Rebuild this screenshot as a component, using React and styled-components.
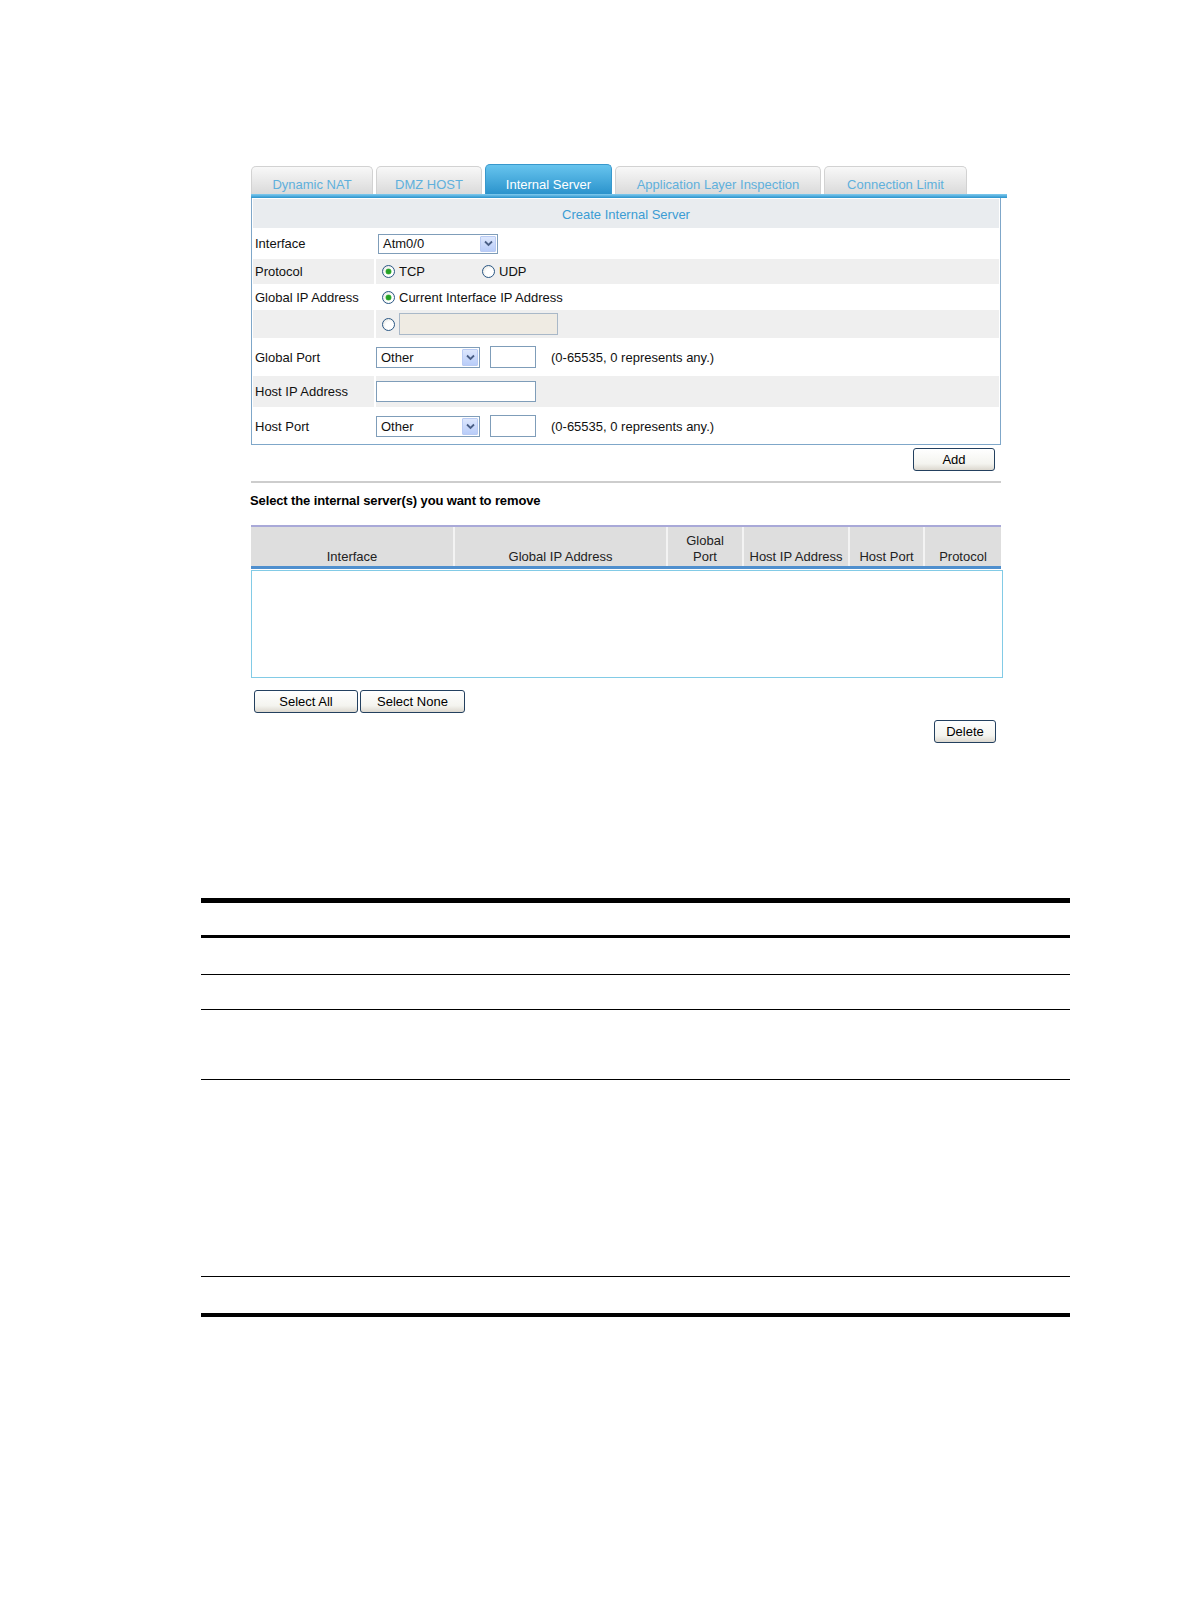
import React from 'react';
import styled, { createGlobalStyle } from 'styled-components';

const GlobalStyle = createGlobalStyle`
    body {
        margin: 0;
        background: #fff;
        font-family: "Liberation Sans", Arial, sans-serif;
        color: #111;
    }
    * { box-sizing: border-box; }
`;

const Page = styled.div`
    min-height: 1616px;
    padding-top: 164px;
    display: flex;
    flex-direction: column;
`;

const Ui = styled.div`
    margin-left: 251px;
    width: 756px;
    font-size: 13px;
`;

const TabBar = styled.div`
    display: flex;
    align-items: flex-end;
    gap: 3px;
    height: 30px;
`;

const Tab = styled.div`
    width: ${p => p.$w}px;
    height: ${p => (p.$active ? 30 : 28)}px;
    padding-top: ${p => (p.$active ? 10 : 8)}px;
    display: flex;
    align-items: center;
    justify-content: center;
    border: 1px solid ${p => (p.$active ? '#3898cc' : '#d2d2d2')};
    border-bottom: none;
    border-radius: 5px 5px 0 0;
    background: ${p => (p.$active
        ? 'linear-gradient(#67c4ee, #2b93cc)'
        : 'linear-gradient(#f8f8f8, #dadada)')};
    color: ${p => (p.$active ? '#fff' : '#5fb0dc')};
    white-space: nowrap;
`;

const TabLine = styled.div`
    height: 4px;
    width: 756px;
    background: linear-gradient(#80cbef, #2a92cb);
`;

const Panel = styled.div`
    width: 750px;
    border: 1px solid #7fa7c9;
    border-top: none;
    padding: 1px 1px 0;
    background: #fff;
    display: flex;
    flex-direction: column;
    gap: 1px;
`;

const HeaderRow = styled.div`
    height: 29px;
    padding-top: 2px;
    background: #e9ecef;
    color: #3b9cd4;
    display: flex;
    align-items: center;
    justify-content: center;
`;

const Row = styled.div`
    height: ${p => p.$h}px;
    display: grid;
    grid-template-columns: 121px 1fr;
    column-gap: 2px;
`;

const LabelCell = styled.div`
    background: ${p => (p.$shade ? '#efefef' : '#fff')};
    display: flex;
    align-items: center;
    padding-left: 2px;
`;

const ValueCell = styled.div`
    background: ${p => (p.$shade ? '#efefef' : '#fff')};
    display: flex;
    align-items: center;
    padding-left: ${p => p.$pad ?? 6}px;
`;

const Option = styled.label`
    display: flex;
    align-items: center;
    gap: 4px;
    width: ${p => (p.$w ? `${p.$w}px` : 'auto')};
`;

const Radio = styled.span`
    width: 13px;
    height: 13px;
    border-radius: 50%;
    border: 1px solid #2a5785;
    background: radial-gradient(circle at 60% 60%, #fff 40%, #dcdcd4);
    display: flex;
    align-items: center;
    justify-content: center;
    flex: none;

    &::after {
        content: '';
        width: 5px;
        height: 5px;
        border-radius: 50%;
        background: #26a126;
        box-shadow: 0 0 0 0.5px #5cc45c;
        display: ${p => (p.$checked ? 'block' : 'none')};
    }
`;

const SelectBox = styled.div`
    width: ${p => p.$w}px;
    height: ${p => p.$h}px;
    border: 1px solid #7f9db9;
    background: #fff;
    display: flex;
    align-items: center;
    justify-content: space-between;
    padding: 1px 1px 1px 4px;
`;

const Arrow = styled.span`
    width: 16px;
    height: 100%;
    border: 1px solid #b9cbf3;
    border-radius: 1px;
    background: linear-gradient(#dde7fd, #b9cdf9);
    display: flex;
    align-items: center;
    justify-content: center;
`;

const TextBox = styled.div`
    width: ${p => p.$w}px;
    height: ${p => p.$h}px;
    margin-left: ${p => p.$ml ?? 0}px;
    border: 1px solid ${p => (p.$disabled ? '#a9b8c8' : '#7f9db9')};
    background: ${p => (p.$disabled ? '#efebe3' : '#fff')};
`;

const Hint = styled.span`
    margin-left: 15px;
`;

const Actions = styled.div`
    width: 750px;
    display: flex;
    justify-content: ${p => p.$align || 'flex-end'};
    gap: 2px;
    margin-top: ${p => p.$mt}px;
    padding: 0 ${p => p.$pr ?? 0}px 0 ${p => p.$pl ?? 0}px;
`;

const Button = styled.button`
    width: ${p => p.$w}px;
    height: 23px;
    font-family: inherit;
    font-size: 13px;
    color: #000;
    border: 1px solid #23405f;
    border-radius: 3px;
    background: linear-gradient(#ffffff, #f4f4ef 70%, #dcd8cf);
    padding: 0;
`;

const Divider = styled.div`
    width: 750px;
    height: 2px;
    background: #cdcdcd;
    margin-top: 10px;
`;

const Heading = styled.div`
    margin-top: 10px;
    margin-left: -1px;
    font-weight: bold;
    line-height: 16px;
    letter-spacing: -0.12px;
    color: #000;
`;

const ListHead = styled.div`
    margin-top: 16px;
    width: 750px;
    height: 44px;
    display: grid;
    grid-template-columns: 202px 213px 76px 106px 75px 78px;
    background: #dedede;
    border-top: 2px solid #a9a9d8;
    border-bottom: 3px solid #4f8fce;
`;

const HeadCell = styled.div`
    display: flex;
    align-items: flex-end;
    justify-content: center;
    text-align: center;
    padding-bottom: 1px;
    line-height: 16px;
    color: #222;
    border-left: ${p => (p.$first ? 'none' : '2px solid #f3f3f3')};
`;

const ListBody = styled.div`
    width: 752px;
    height: 108px;
    margin-top: 1px;
    border: 1px solid #82cbe6;
    background: #fff;
`;

const DocTable = styled.div`
    margin: 155px 0 0 201px;
    width: 869px;
    border-top: 5px solid #000;
    border-bottom: 4px solid #000;
`;

const DocRow = styled.div`
    height: ${p => p.$h}px;
    border-bottom: ${p => p.$rule}px solid #000;

    &:last-child {
        border-bottom: none;
    }
`;

const Chevron = () => (
    <svg width="9" height="7" viewBox="0 0 9 7">
        <path d="M1 1.5 L4.5 5 L8 1.5" fill="none" stroke="#4a5f86" strokeWidth="1.8" />
    </svg>
);

const Select = ({ value, w, h }) => (
    <SelectBox $w={w} $h={h}>
        <span>{value}</span>
        <Arrow><Chevron /></Arrow>
    </SelectBox>
);

const tabs = [
    { label: 'Dynamic NAT', w: 122 },
    { label: 'DMZ HOST', w: 106 },
    { label: 'Internal Server', w: 127, active: true },
    { label: 'Application Layer Inspection', w: 206 },
    { label: 'Connection Limit', w: 143 },
];

const columns = [
    'Interface',
    'Global IP Address',
    <>Global<br />Port</>,
    'Host IP Address',
    'Host Port',
    'Protocol',
];

const docRows = [
    { h: 35, rule: 3 },
    { h: 37, rule: 1 },
    { h: 35, rule: 1 },
    { h: 70, rule: 1 },
    { h: 197, rule: 1 },
    { h: 36, rule: 0 },
];

const PortRow = ({ label }) => (
    <Row $h={label === 'Host Port' ? 36 : 36}>
        <LabelCell>{label}</LabelCell>
        <ValueCell $pad={0}>
            <Select value="Other" w={104} h={21} />
            <TextBox $w={46} $h={22} $ml={10} />
            <Hint>(0-65535, 0 represents any.)</Hint>
        </ValueCell>
    </Row>
);

const App = () => (
    <>
        <GlobalStyle />
        <Page>
            <Ui>
                <TabBar>
                    {tabs.map(t => (
                        <Tab key={t.label} $w={t.w} $active={t.active}>{t.label}</Tab>
                    ))}
                </TabBar>
                <TabLine />
                <Panel>
                    <HeaderRow>Create Internal Server</HeaderRow>
                    <Row $h={29}>
                        <LabelCell>Interface</LabelCell>
                        <ValueCell $pad={2}><Select value="Atm0/0" w={120} h={20} /></ValueCell>
                    </Row>
                    <Row $h={25}>
                        <LabelCell $shade>Protocol</LabelCell>
                        <ValueCell $shade>
                            <Option $w={100}><Radio $checked />TCP</Option>
                            <Option><Radio />UDP</Option>
                        </ValueCell>
                    </Row>
                    <Row $h={24}>
                        <LabelCell>Global IP Address</LabelCell>
                        <ValueCell>
                            <Option><Radio $checked />Current Interface IP Address</Option>
                        </ValueCell>
                    </Row>
                    <Row $h={28}>
                        <LabelCell $shade />
                        <ValueCell $shade>
                            <Option><Radio /><TextBox $w={159} $h={22} $disabled /></Option>
                        </ValueCell>
                    </Row>
                    <PortRow label="Global Port" />
                    <Row $h={31}>
                        <LabelCell $shade>Host IP Address</LabelCell>
                        <ValueCell $shade $pad={0}><TextBox $w={160} $h={21} /></ValueCell>
                    </Row>
                    <PortRow label="Host Port" />
                </Panel>
                <Actions $mt={3} $pr={6}>
                    <Button $w={82}>Add</Button>
                </Actions>
                <Divider />
                <Heading>Select the internal server(s) you want to remove</Heading>
                <ListHead>
                    {columns.map((c, i) => (
                        <HeadCell key={i} $first={i === 0}>{c}</HeadCell>
                    ))}
                </ListHead>
                <ListBody />
                <Actions $mt={12} $align="flex-start" $pl={3}>
                    <Button $w={104}>Select All</Button>
                    <Button $w={105}>Select None</Button>
                </Actions>
                <Actions $mt={7} $pr={5}>
                    <Button $w={62}>Delete</Button>
                </Actions>
            </Ui>
            <DocTable>
                {docRows.map((r, i) => <DocRow key={i} $h={r.h} $rule={r.rule} />)}
            </DocTable>
        </Page>
    </>
);

export default App;
